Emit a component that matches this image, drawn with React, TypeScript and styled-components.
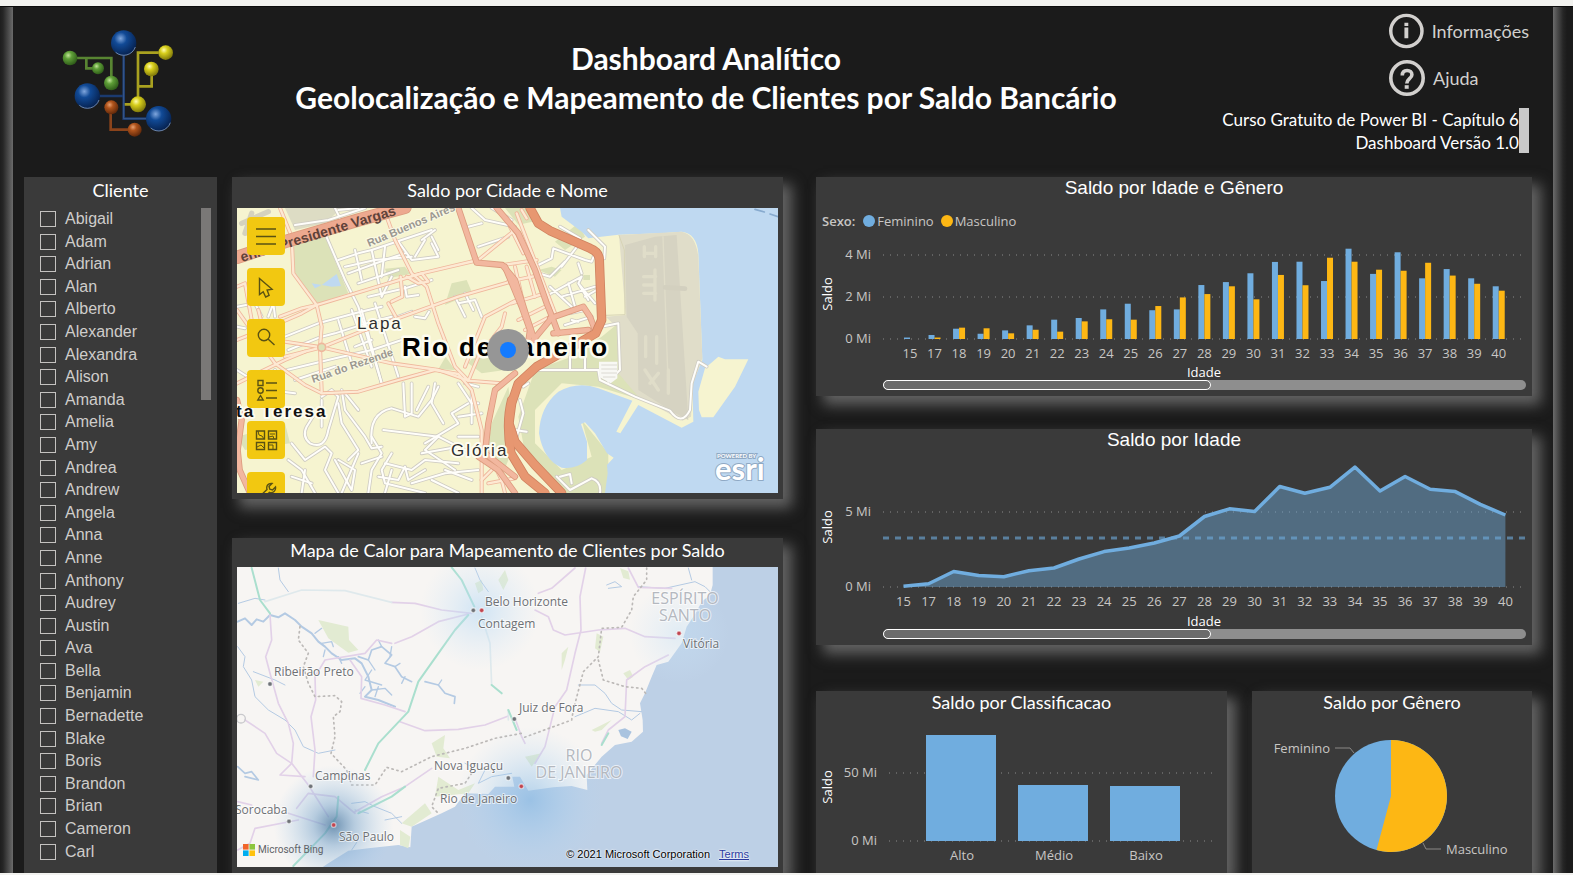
import React from "react";
import styled, { createGlobalStyle } from "styled-components";

const humanist = `Lato, "Open Sans", sans-serif`;
const ui = `"Open Sans", "Noto Sans", sans-serif`;
const grotesque = `"Liberation Sans", Arial, sans-serif`;

const blue = "#70addf";
const amber = "#fdb714";

const GlobalStyle = createGlobalStyle`
  *, *::before, *::after { box-sizing: border-box; }
  body { margin: 0; background: #1b1b1b; }
  h1, h2, p, ul { margin: 0; padding: 0; }
`;

/* ---------- page frame ---------- */

const Page = styled.div`
  display: flex;
  flex-direction: column;
  min-height: 100vh;
  font-family: ${humanist};
  color: #fff;
`;

const Strip = styled.div<{ $size: number }>`
  flex: none;
  height: ${(p) => p.$size}px;
  background: #f2f2ef;
`;

const Stage = styled.div`
  flex: 1;
  display: flex;
  border-top: 1px solid #0c0c0c;
  overflow: hidden;
`;

const Edge = styled.div<{ $side: "left" | "right" }>`
  flex: none;
  width: ${(p) => (p.$side === "left" ? 13 : 20)}px;
  background: linear-gradient(
    to ${(p) => p.$side},
    #6b6b6b 0,
    #484848 5px,
    #262626 10px,
    #1b1b1b 14px
  );
`;

const Canvas = styled.main`
  flex: 1;
  min-width: 0;
  display: flex;
  flex-direction: column;
  padding: 0 21px 0 11px;
  background: #1b1b1b;
`;

/* ---------- header ---------- */

const Header = styled.header`
  display: flex;
  height: 170px;
`;

const LogoBox = styled.div`
  flex: none;
  width: 193px;
  padding: 21px 0 0 36px;
`;

const Heading = styled.h1`
  flex: 1;
  padding-top: 32px;
  font-size: 30px;
  line-height: 39px;
  font-weight: 700;
  text-align: center;
`;

const Aside = styled.div`
  flex: none;
  width: 337px;
  display: flex;
  flex-direction: column;
  align-items: flex-end;
  padding: 6px 3px 0 0;
`;

const HelpNav = styled.nav`
  display: flex;
  flex-direction: column;
  gap: 11px;
  width: 140px;
`;

const HelpButton = styled.button`
  display: flex;
  align-items: center;
  gap: 8px;
  height: 36px;
  padding: 0;
  border: 0;
  background: none;
  color: #d2d0ce;
  font: 18px/36px ${humanist};
  white-space: nowrap;
`;

const Version = styled.div`
  display: flex;
  margin-top: 12px;
  font-size: 17px;
  line-height: 23px;
  text-align: right;
`;

const VersionBar = styled.span`
  width: 10px;
  height: 45px;
  background: #c8c8c8;
`;

/* ---------- panels ---------- */

const Columns = styled.div`
  flex: 1;
  display: grid;
  grid-template-columns: 193px minmax(0, 566fr) minmax(0, 749fr);
`;

const Column = styled.div<{ $gap: number; $left: number }>`
  display: flex;
  flex-direction: column;
  gap: ${(p) => p.$gap}px;
  margin-left: ${(p) => p.$left}px;
`;

const Panel = styled.section<{ $grow?: boolean; $flat?: boolean; $ratio?: number }>`
  display: flex;
  flex-direction: column;
  min-width: 0;
  flex: ${(p) => (p.$ratio ? `${p.$ratio} 1 0` : p.$grow ? "1 0 auto" : "none")};
  background: #3a3a3a;
  box-shadow: ${(p) => (p.$flat ? "none" : "8px 8px 13px 1px #636363")};
`;

const PanelTitle = styled.h2<{ $height: number; $plain?: boolean }>`
  flex: none;
  height: ${(p) => p.$height}px;
  line-height: ${(p) => (p.$plain ? p.$height : p.$height - 4)}px;
  font-family: ${(p) => (p.$plain ? grotesque : humanist)};
  font-size: ${(p) => (p.$plain ? 19 : 18)}px;
  font-weight: 400;
  text-align: center;
  white-space: nowrap;
`;

/* ---------- client filter ---------- */

const FilterBody = styled.div`
  flex: 1;
  display: flex;
  padding: 0 6px 10px 16px;
`;

const NameList = styled.ul`
  flex: 1;
  display: flex;
  flex-direction: column;
  justify-content: space-between;
  list-style: none;
`;

const NameLabel = styled.label`
  display: flex;
  align-items: center;
  gap: 9px;
  height: 22px;
  font: 16px/22px ${grotesque};
  color: #cfcdcb;
`;

const Tick = styled.input`
  appearance: none;
  width: 16px;
  height: 16px;
  margin: 0;
  border: 1px solid #c4c2c0;
`;

const ListScroll = styled.div`
  flex: none;
  width: 10px;
  height: 192px;
  background: #7a7877;
`;

/* ---------- maps ---------- */

const MapFrame = styled.div`
  position: relative;
  flex: 1 0 auto;
  margin: 0 5px 6px;
  overflow: hidden;
`;

const MapSvg = styled.svg`
  display: block;
  width: 100%;
`;

const MapLabel = styled.text<{ $size: number; $bold?: boolean; $road?: boolean }>`
  font-family: ${grotesque};
  font-size: ${(p) => p.$size}px;
  font-weight: ${(p) => (p.$bold ? 700 : 400)};
  letter-spacing: ${(p) => (p.$road ? "normal" : "2px")};
  paint-order: stroke;
  stroke-linejoin: round;
`;

const PlaceLabel = styled.text<{ $region?: boolean }>`
  font-family: ${ui};
  font-size: ${(p) => (p.$region ? 16 : 12)}px;
  fill: ${(p) => (p.$region ? "#b4b8bf" : "#6e7175")};
  stroke: rgba(255, 255, 255, 0.65);
  stroke-width: 2px;
  paint-order: stroke;
  text-anchor: ${(p) => (p.$region ? "middle" : "start")};
`;

const Tools = styled.div`
  position: absolute;
  top: 9px;
  left: 10px;
  display: flex;
  flex-direction: column;
  gap: 13px;
`;

const Tool = styled.button`
  display: block;
  width: 38px;
  height: 38px;
  padding: 0;
  border: 0;
  border-radius: 4px;
  background: #f2c811;
`;

const Credit = styled.div`
  position: absolute;
  right: 29px;
  bottom: 6px;
  display: flex;
  gap: 9px;
  font: 11px/14px ${grotesque};
  color: #000;
  text-shadow: 0 0 2px #fff, 0 0 2px #fff;
`;

const CreditLink = styled.a`
  color: #2b3aa0;
`;

const BingMark = styled.div`
  position: absolute;
  left: 6px;
  bottom: 10px;
  display: flex;
  align-items: center;
  gap: 3px;
  font: 10px/14px Roboto, sans-serif;
  color: #5f6368;
`;

/* ---------- charts ---------- */

const ChartSvg = styled.svg`
  display: block;
  width: 100%;
  height: auto;
`;

const AxisText = styled.text<{ $strong?: boolean }>`
  font-family: ${ui};
  font-size: 13px;
  fill: ${(p) => (p.$strong ? "#fff" : "#c8c6c4")};
`;

const Legend = styled.div`
  display: flex;
  align-items: center;
  gap: 2px;
  height: 20px;
  margin-top: 13px;
  padding-left: 6px;
  font: 13px/20px ${ui};
  color: #c8c6c4;
`;

const LegendTitle = styled.strong`
  margin-right: 6px;
  font-weight: 600;
`;

const LegendItem = styled.span`
  margin-right: 5px;
`;

const Dot = styled.span<{ $color: string }>`
  width: 12px;
  height: 12px;
  border-radius: 50%;
  background: ${(p) => p.$color};
`;

const Track = styled.div`
  height: 10px;
  margin: 0 6px 6px 67px;
  border-radius: 5px;
  background: #8e8e8e;
`;

const Thumb = styled.div`
  width: 51%;
  height: 10px;
  border: 1px solid #fff;
  border-radius: 5px;
  background: #6b6b6b;
`;

const Pair = styled.div`
  flex: 1 0 auto;
  display: flex;
  gap: 25px;
  margin-top: 13px;
`;

/* ---------- data ---------- */

const names = [
  "Abigail", "Adam", "Adrian", "Alan", "Alberto", "Alexander", "Alexandra", "Alison",
  "Amanda", "Amelia", "Amy", "Andrea", "Andrew", "Angela", "Anna", "Anne", "Anthony",
  "Audrey", "Austin", "Ava", "Bella", "Benjamin", "Bernadette", "Blake", "Boris",
  "Brandon", "Brian", "Cameron", "Carl",
];

const ages = [15, ...Array.from({ length: 24 }, (_, i) => 17 + i)];

const women = [0.07, 0.19, 0.49, 0.25, 0.41, 0.65, 0.92, 1, 1.41, 1.68, 1.37, 1.41, 2.57, 2.71, 3.13, 3.67, 3.68, 2.76, 4.3, 3.1, 4.13, 2.89, 3.33, 2.89, 2.51];
const men = [0, 0.07, 0.54, 0.51, 0.27, 0.44, 0.35, 0.84, 0.94, 0.92, 1.57, 1.98, 2.14, 2.51, 1.89, 3.05, 2.56, 3.87, 3.68, 3.3, 3.25, 3.63, 3.02, 2.63, 2.3];
const totals = [0.05, 0.22, 1.03, 0.76, 0.69, 1.09, 1.27, 1.87, 2.36, 2.6, 2.93, 3.4, 4.7, 5.21, 5.03, 6.7, 6.25, 6.65, 7.99, 6.4, 7.37, 6.52, 6.36, 5.51, 4.8];

/* ---------- drawings ---------- */

function Logo() {
  const tones: Record<string, [string, string, string]> = {
    b: ["#7fa6dd", "#114a96", "#06204d"],
    g: ["#c3e59a", "#5f9f38", "#2d5a18"],
    y: ["#fffbb0", "#d8cf1c", "#7d760a"],
    o: ["#e8a070", "#b0541c", "#5e270a"],
  };
  const balls: [string, number, number, number][] = [
    ["b", 371, 130, 38], ["b", 262, 289, 38], ["b", 476, 357, 38],
    ["g", 210, 175, 22], ["g", 294, 206, 18], ["g", 334, 250, 22],
    ["y", 497, 159, 22], ["y", 454, 208, 22], ["y", 414, 314, 24],
    ["o", 334, 323, 21], ["o", 404, 390, 21],
  ];
  return (
    <svg width="117" height="112" viewBox="180 85 351 336" fill="none" role="img" aria-label="Logo">
      <defs>
        {Object.entries(tones).map(([k, [a, b, c]]) => (
          <radialGradient key={k} id={`ball-${k}`} cx="0.38" cy="0.32" r="0.7">
            <stop offset="0" stopColor={a} />
            <stop offset="0.35" stopColor={b} />
            <stop offset="1" stopColor={c} />
          </radialGradient>
        ))}
      </defs>
      <path d="M371 165V357H440M298 289H371" stroke="#1b3a6e" strokeWidth="8" />
      <path d="M371 165V357H440" stroke="#4a6a9c" strokeWidth="2" />
      <path d="M230 175H334V232M259 175V206H278" stroke="#588532" strokeWidth="8" />
      <path d="M476 159H414V292M455 228V260H414M374 314H392" stroke="#a9a120" strokeWidth="8" />
      <path d="M332 342V390H386" stroke="#8a431b" strokeWidth="8" />
      {balls.map(([k, x, y, r]) => (
        <g key={`${x}`}>
          <circle cx={x} cy={y} r={r} fill={`url(#ball-${k})`} />
          {k === "b" && (
            <path
              d={`M${x - 24} ${y + 28}A37 37 0 0 0 ${x + 35} ${y + 12}`}
              stroke="#9fb6d8"
              strokeWidth="2"
            />
          )}
        </g>
      ))}
    </svg>
  );
}

function InfoIcon() {
  return (
    <svg width="36" height="36" viewBox="0 0 36 36" fill="none" aria-hidden="true">
      <circle cx="18" cy="18" r="16.2" stroke="#d2d0ce" strokeWidth="3.6" />
      <path d="M18 9.5v3.4M18 14.500v11" stroke="#d2d0ce" strokeWidth="4" />
    </svg>
  );
}

function HelpIcon() {
  return (
    <svg width="36" height="36" viewBox="0 0 36 36" fill="none" aria-hidden="true">
      <circle cx="18" cy="18" r="16.2" stroke="#d2d0ce" strokeWidth="3.6" />
      <path
        d="M13.3 15.5c0-3.2 1.9-5 4.8-5s4.8 1.7 4.8 4.2c0 4-5.1 4.1-5.1 8.8"
        stroke="#d2d0ce"
        strokeWidth="3.6"
      />
      <path d="M17.7 25.2v3.6" stroke="#d2d0ce" strokeWidth="4" />
    </svg>
  );
}

const toolIcons: { name: string; art: React.ReactNode }[] = [
  { name: "Menu", art: <path d="M9 12h20M9 19.500h20M9 27h20" /> },
  { name: "Selecionar", art: <path d="M12.500 10.500v16l3.700-2.700 2.500 5.200 3.400-1.700-2-5.200 5-.9z" /> },
  { name: "Buscar", art: <><circle cx="17" cy="16" r="5.700" /><path d="M21 20l6.500 6" /></> },
  {
    name: "Legenda",
    art: (
      <>
        <path d="M11 10.500h5v5h-5zM13.500 25.500l2.700 4.500h-5.400zM19 13h11M19 20.500h11M19 28h11" />
        <circle cx="13.500" cy="20.500" r="2.700" />
      </>
    ),
  },
  {
    name: "Mapa base",
    art: (
      <>
        <path d="M9.500 10h8v8h-8zM21.500 10h8v8h-8zM9.500 21.500h8v7h-8zM21.500 21.500h8v7h-8z" />
        <path strokeWidth="1" d="M11 10l1 4 3 1 2 3M23 13h5M22 16l4-1 1 3M10 26l4-2 3 3M22 24h4v4" />
      </>
    ),
  },
  {
    name: "Ferramentas",
    art: <path d="M10 27l10-9.500c-1-3.500 1-6.500 5-6l-3 3 .8 2.700 2.700.7 3-3c.7 4-2.500 6.500-6 5.500L12 30" />,
  },
];

const highways = [
  "M915 114L940 160L975 182L1095 235Q1122 245 1123 270L1130 450L1112 490L1060 520L935 590L880 640L860 700L852 760L870 815L930 885L1010 969",
  "M860 690Q842 760 858 850L900 920L960 969",
];
const avenues = [
  "M36 262L180 215L400 150L540 112",
  "M700 114L755 278L832 285L870 330L905 440L925 500",
  "M815 114L880 190L930 300L965 400L985 450L1000 490",
  "M840 290L890 410L915 480L905 550",
  "M975 445L1075 410L1095 440L1110 480M985 490L1090 480M925 510L975 450",
  "M870 610L810 660L790 760L780 850L870 920",
  "M36 690L50 750L38 840L44 900L75 969",
  "M760 860L820 900L870 969",
];
const streets = [
  "M165 114L200 200L205 310L275 405L290 470L285 530L290 665",
  "M36 510L150 465L230 430L275 405L450 352L590 310L760 270L870 180",
  "M165 440L230 415L275 405",
  "M180 515L290 532L500 580L640 600L730 632L830 640",
  "M180 560L290 532L420 480L560 430L700 380L875 330",
  "M36 640L180 570L240 545M36 420L150 580",
  "M150 580L240 645L290 670L400 665L520 630L630 600L700 612L740 660L770 780L770 969",
  "M485 140L510 210L560 310L605 350L640 460L690 590L730 632",
  "M36 350L60 340L80 450M110 460L100 420",
  "M490 400L512 440M500 395L532 380L527 320",
  "M545 320L580 340L610 335L590 310L560 318",
  "M730 632L760 560L830 470L840 430M720 590L780 440L875 390",
  "M875 130L990 430M890 120L905 145",
  "M835 285L935 270M850 335L945 315M860 400L960 370M880 450L970 405M900 480L975 440",
  "M855 170L895 250M870 290L895 400M905 290L930 380",
  "M780 830L830 930L840 969M800 900L770 930M790 940L870 925",
];
const lanes = [
  "M210 165L310 150L420 114M330 114L355 165M400 114L340 120",
  "M300 190L360 330L400 410L470 640",
  "M340 270L400 250L440 240L620 180M360 290L450 270L560 260",
  "M390 240L410 330M440 240L470 380M480 230L470 320M520 215L560 270L640 260L620 220",
  "M370 310L480 270L540 250M400 340L520 300M500 320L470 380",
  "M600 210L570 260M630 180L590 210M620 200L640 240",
  "M36 410L90 400L110 440M36 470L60 475M130 440L145 400L150 440",
  "M180 500L280 460L390 430L470 410M190 540L290 500L330 490L440 455L500 440",
  "M340 450L380 580M410 420L470 640M380 420L440 590M450 400L520 620",
  "M185 600L350 560L440 540L530 510M210 630L300 600L330 590M390 530L440 510",
  "M570 440L600 445L612 425M690 380L720 440M720 370L745 420M700 400L750 390L770 440",
  "M520 440L560 425M430 380L540 355L620 330M540 350L545 380L580 375",
  "M36 600L130 660L210 670M150 600L110 640",
  "M290 680L320 660L340 680L310 780Q300 840 255 820Q230 800 245 770L270 730M290 690L290 770",
  "M350 660L360 720L420 800L440 835L470 830M360 670L400 720M340 700L350 760L400 840L370 870",
  "M200 820L240 870L300 830L320 850L300 900L340 969M190 870L230 900L270 969M330 870L380 960L390 900L340 870",
  "M440 820Q430 730 500 715L580 740L620 690L640 650M475 780L640 800L680 820L720 850",
  "M440 800L470 850L440 900L430 969M480 880L560 900L600 870L700 880M460 920L520 930L540 890L550 930L600 900M500 850L470 900L480 940L600 969",
  "M535 640L540 740L560 730L560 640M575 720L610 650M620 700L655 760M630 640L620 700",
  "M600 820L700 760L680 730L730 700M590 850L700 830L740 850M700 640L740 700L760 700M720 640L760 650",
  "M640 800L600 840L690 900M660 900L740 930M620 930L700 969M560 940L660 910L760 900",
  "M200 920L260 940M230 969L240 900M400 850L350 969M410 880L470 860M480 969L500 900",
  "M700 740L770 730M740 660L740 760M760 800L700 800",
  "M740 114L780 150L870 170M730 170L770 160M760 230L850 200M800 114L860 150",
  "M940 285L980 265L985 235L1080 270L1100 275L1110 250M1010 290L1060 225M940 310L975 320L1020 275M1060 280L1070 310",
  "M970 375L1070 320L1060 340L1110 400M975 350L1040 410M1060 340L1090 390M1030 340L1050 410M1080 380L1115 360M1010 380L1110 350",
  "M1020 465L1100 440M1035 430L1080 420M1040 450L1060 455M1090 180L1140 230L1138 265M1005 170L1065 205",
  "M930 600L1140 600M1035 560L1035 600M1080 560L1080 600M1130 470L1180 460L1185 600L1150 635",
  "M885 690L895 730L875 800M895 650L910 640M870 780L905 785",
  "M995 920L1035 960L1100 925Q1130 935 1125 969M1005 920L1035 912L1040 940",
  "M1120 600L1125 630L1230 680L1335 722Q1370 770 1395 720L1400 640L1420 575L1445 590",
];

function CityMap() {
  return (
    <MapSvg height="285" viewBox="0 0 541 285" preserveAspectRatio="xMidYMid slice" role="img" aria-label="Mapa do Rio de Janeiro">
      <rect width="541" height="285" fill="#f6f4d0" />
      <g transform="translate(-12 -38) scale(0.33333)" fill="none" strokeLinejoin="round" strokeLinecap="round">
        <g fill="#dce2b8">
          <path d="M200 225L300 200L370 370L275 402L210 310zM480 296L540 290L556 312L490 325zM660 405L680 340L725 330L742 370zM640 598L662 560L690 600zM770 610L730 580L760 540L830 560L840 600z" />
          <path d="M780 880L800 760L850 650L860 720L850 870L830 920zM36 800L180 760L195 820L60 840z" />
          <path d="M990 215L1060 160L1080 200L1020 240zM940 300L980 290L1010 300L990 320zM1075 315h20v15h-20zM840 114h70l20 40l-50 10z" />
          <path d="M930 600L1040 560L1130 500L1180 460L1190 610L1270 670L1250 690L1120 650L1010 640L930 720L930 820L1010 900L1100 860L1070 750L1150 850L1150 969L1020 969L900 850L880 740z" />
        </g>
        <path d="M180 114L350 114L300 160L210 180z" fill="#dddcc4" />
        <path d="M260 340L290 345L335 312L348 348L320 350L290 345L270 355z" fill="#bfd9f1" />
        <path d="M50 160L130 125M60 190L80 130" stroke="#d5d2be" strokeWidth="16" />
        <path
          d="M1005 114L1659 114L1659 969L1140 969L1148 910L1146 885L1166 863L1146 850L1110 790L1080 757L1068 762L1086 815L1086 870Q1050 900 1010 893Q955 870 942 790Q945 710 1000 665Q1060 632 1120 655L1222 692L1174 785L1186 790L1240 705L1370 773L1405 755L1402 640L1432 570L1420 250Q1415 190 1370 185L1310 190L1180 194L1090 205L1070 185L1010 140z"
          fill="#bfd9f1"
        />
        <path d="M1420 665L1440 595L1480 560L1500 568L1570 568L1530 650L1465 742L1430 742L1422 720z" fill="#f6f4d0" />
        <path d="M1182 195L1370 185Q1412 192 1420 260L1432 565L1405 640L1398 740L1372 752L1240 680L1180 610L1175 470L1142 440L1202 435z" fill="#e0ddc9" />
        <path d="M1142 436L1200 434L1198 240L1182 196" stroke="#d7d4b6" strokeWidth="3" />
        <path d="M1200 225L1290 200L1355 195L1390 750L1350 730L1240 660L1238 490L1205 440z" fill="#d6d3c2" />
        <path d="M1258 250h34M1258 230v30M1292 230v30M1256 320h36M1290 300v90M1256 345h30M1256 370h36M1262 500v60M1295 500v80M1330 600v70M1275 640l25 -30M1260 600l40 60" stroke="#e0ddc9" strokeWidth="10" />
        <path d="M1314 200l15 430M1326 350h40" stroke="#e0ddc9" strokeWidth="4" />
        <path d="M1320 352l60 4" stroke="#d3d0bf" strokeWidth="14" />
        <path d="M1590 118l28 8M1635 132l24 8" stroke="#88abcf" strokeWidth="5" />

        {lanes.map((d) => <path key={d} d={d} stroke="#cfccc3" strokeWidth="11" />)}
        {lanes.map((d) => <path key={d} d={d} stroke="#fffefa" strokeWidth="6" />)}
        {streets.map((d) => <path key={d} d={d} stroke="#efb79c" strokeWidth="12" />)}
        {streets.map((d) => <path key={d} d={d} stroke="#fde9d3" strokeWidth="7" />)}
        {avenues.map((d, i) => <path key={d} d={d} stroke="#dc9b7e" strokeWidth={i ? 19 : 40} />)}
        {avenues.map((d, i) => <path key={d} d={d} stroke={i ? "#f2b79f" : "#eda98f"} strokeWidth={i ? 14 : 35} />)}
        {highways.map((d) => <path key={d} d={d} stroke="#cf8260" strokeWidth="28" />)}
        {highways.map((d) => <path key={d} d={d} stroke="#e79771" strokeWidth="23" />)}
        <path d="M1122 575h55v50l-20 15l-35 -20z" fill="#f8f8f4" />
        <path d="M1130 585h45M1130 597h45M1130 609h45M1135 621h35" stroke="#dcdad2" strokeWidth="3" />
        <circle cx="290" cy="532" r="12" fill="#dce2b8" stroke="#efb79c" strokeWidth="5" />
      </g>

      <MapLabel $size={14} $bold x="5" y="54" fill="#5f4239" $road transform="rotate(-17 5 54)">enida Presidente Vargas</MapLabel>
      <MapLabel $size={11} $bold x="132" y="39" fill="#9b9891" stroke="#fbfae6" strokeWidth="2" $road transform="rotate(-23 132 39)">Rua Buenos Aires</MapLabel>
      <MapLabel $size={11} $bold x="76" y="175" fill="#9b9891" stroke="#fbfae6" strokeWidth="2" $road transform="rotate(-19 76 175)">Rua do Rezende</MapLabel>
      <MapLabel $size={17} x="120" y="121" fill="#2e2e2e" stroke="#fdfcf0" strokeWidth="4">Lapa</MapLabel>
      <MapLabel $size={17} x="214" y="248" fill="#2e2e2e" stroke="#fdfcf0" strokeWidth="4">Glória</MapLabel>
      <MapLabel $size={17} $bold x="-1" y="209" fill="#111" stroke="#fdfcf0" strokeWidth="4">ta Teresa</MapLabel>
      <MapLabel $size={26} $bold x="165" y="148" fill="#000" stroke="#fdfcf0" strokeWidth="5">Rio de Janeiro</MapLabel>
      <circle cx="271" cy="142" r="21" fill="#969696" />
      <circle cx="271" cy="142" r="8" fill="#147bff" />
      <g fill="#fff" stroke="#8fa9c4" strokeWidth="2" paintOrder="stroke" fontFamily={humanist} fontWeight="700">
        <text x="478" y="272" fontSize="31">esri</text>
        <text x="480" y="250" fontSize="6">POWERED BY</text>
      </g>
    </MapSvg>
  );
}

const heat = [
  { x: 326, y: 885, r: 180, id: "core" },
  { x: 915, y: 810, r: 220, id: "mid" },
  { x: 765, y: 241, r: 180, id: "soft" },
  { x: 1362, y: 310, r: 150, id: "faint" },
];
const towns: [number, number, boolean][] = [
  [745, 241, false], [135, 462, false], [257, 769, false], [192, 874, false],
  [868, 567, false], [850, 744, false], [770, 241, true], [326, 885, true],
  [889, 769, true], [1362, 310, true],
];

function HeatMap() {
  return (
    <MapSvg height="300" viewBox="0 0 541 300" preserveAspectRatio="xMidYMid slice" role="img" aria-label="Mapa de calor do sudeste do Brasil">
      <defs>
        <radialGradient id="core">
          <stop offset="0" stopColor="#4a779f" stopOpacity="0.8" />
          <stop offset="0.35" stopColor="#76a3cb" stopOpacity="0.5" />
          <stop offset="1" stopColor="#a9d0f2" stopOpacity="0" />
        </radialGradient>
        <radialGradient id="mid">
          <stop offset="0" stopColor="#84b8e4" stopOpacity="0.6" />
          <stop offset="0.5" stopColor="#9cc9ee" stopOpacity="0.3" />
          <stop offset="1" stopColor="#b9daf5" stopOpacity="0" />
        </radialGradient>
        <radialGradient id="soft">
          <stop offset="0" stopColor="#b0d6f5" stopOpacity="0.55" />
          <stop offset="1" stopColor="#cfe6f8" stopOpacity="0" />
        </radialGradient>
        <radialGradient id="faint">
          <stop offset="0" stopColor="#c4e0f5" stopOpacity="0.45" />
          <stop offset="1" stopColor="#cfe6f8" stopOpacity="0" />
        </radialGradient>
      </defs>
      <rect width="541" height="300" fill="#f7f5f3" />
      <g transform="translate(-12 -37) scale(0.33333)" fill="none" strokeLinejoin="round" strokeLinecap="round">
        <g fill="#e2ebd2">
          <path d="M280 270L370 290L372 330L400 360L370 368L310 325zM820 150L840 120L850 150L835 180zM750 160l20 -10l5 30l-15 10zM620 640l40 -25l-5 40l20 30l-40 -5zM640 740l60 40l50 -20l-20 30l-100 10zM530 880l70 -60l20 30l-60 40zM90 450l25 5l-15 15z" />
          <path d="M1100 600l60 -30l-30 30l-20 5zM1195 430l20 -10l10 20l-15 10zM1115 310l20 10l-10 45l-15 -10zM1185 114l25 10l5 25l-20 -5zM1010 370l20 -20l-10 40l-10 30zM900 680l50 -10l-30 40z" />
        </g>
        <path
          d="M1463 100L1463 165L1455 195L1430 215L1412 250L1385 290L1370 340L1330 395L1295 405L1280 440L1260 490L1245 520L1253 570L1254 605L1220 635L1170 645L1130 680L1085 735L1087 780L1040 768L985 772L910 782L885 740L862 740L868 770L810 770L790 792L720 790L690 830L650 850L560 890L556 952L520 945L430 955L370 962L310 1000L280 1020L1670 1020L1670 100z"
          fill="#bdd0e6"
        />
        <path d="M1180 600l20 -5l20 10l-12 22l-20 -8z" fill="#a9c3df" />
        <path d="M525 900L556 920L550 955L525 945z" fill="#e2ebd2" />
        <g stroke="#b4cae3" strokeWidth="3">
          <path d="M38 275L60 265L80 285L95 268L115 275L135 255L160 262L180 250L210 270L230 290L260 310L280 335L300 350L320 370L350 390L390 385L410 400L430 440L440 480L420 500L460 510L510 530" strokeWidth="6" />
          <path d="M400 380L430 390L440 360L470 350L500 375L480 400L510 410L530 440L560 455M600 455L640 465L660 490L690 500L688 520" strokeWidth="5" />
          <path d="M270 310l20 -15M290 340l30 -5l5 15M300 360l-5 20M340 380l10 20M430 390l20 30M440 420l-20 30l50 15M440 480l40 -5l20 20M450 500l10 -30M470 350l-10 -20M500 350l-5 30M640 465l10 -15M420 470l-15 20M510 410l15 -10M540 440l-10 20" strokeWidth="4" />
          <path d="M160 114L165 150L190 185M40 220L90 205L120 210M38 350L60 380L55 410L80 450L90 500L130 540L180 570L210 600L235 650L280 670L330 660M750 114L765 150L790 185M85 425L150 450L180 465" />
          <path d="M38 710L60 730L80 725L100 750L60 740" strokeWidth="5" />
          <path d="M1145 165L1170 155L1190 170L1150 175M1240 170L1320 175L1410 155L1440 170L1460 190M1060 465L1110 465L1140 490L1160 520L1190 540L1250 545M1050 560L1110 535L1180 545L1220 570L1245 550M1390 114L1400 150" />
          <path d="M380 820L420 815L450 830L500 850L530 880M390 840L430 850M480 870L530 860M350 920L400 930L380 960M780 720L760 760L800 740L860 730M740 710L720 700" />
        </g>
        <g stroke="#e2d1e8" strokeWidth="5">
          <path d="M135 255L140 330L122 380L135 430L160 520L190 580L205 640L200 700L250 765L310 860" />
          <path d="M60 570L120 610L155 670L200 700L165 735L240 740M38 960L75 940L90 895L220 870M190 850L300 885M38 815L80 825" />
          <path d="M500 217L570 220L650 240L740 250M510 340L560 320L640 275L730 252M500 340L455 330L420 370L300 390L270 440L272 510L258 560L270 660L265 740" />
          <path d="M375 390L410 440L408 505L480 525L540 545M525 575L600 602L700 598L780 585L850 558M620 715L540 770L470 800L390 845M215 835L250 790L330 800L390 850" />
          <path d="M940 190L980 175L1050 114M1082 114L1065 200L1068 300L1050 370L1025 480L990 530L975 590L960 650L930 700M930 240L970 260L985 300L1020 315L1120 300L1200 295L1260 320L1350 325M1240 172L1210 114M1330 375L1260 410L1205 450L1200 560L1150 600L1130 640M1240 172L1340 175M870 565L890 620L900 640" />
        </g>
        <path d="M120 215L230 180L360 182L500 217M770 260L795 340L800 465M850 540L850 570" stroke="#dfe9ec" strokeWidth="5" />
        <path d="M80 114L105 210L135 250M680 112L710 150L748 230M730 255L690 300L640 370L580 455L550 545L460 640L420 720M400 850L500 800L540 770M205 1008L300 910L335 860L340 800M800 465L830 490M850 540L875 600M1150 610L1130 645" stroke="#aadfce" strokeWidth="6" />
        <path d="M225 290L220 330L250 370L235 410L250 460L270 500L330 497L350 515L345 545L325 560L330 620L318 670L365 720L380 765L450 765L485 712L530 725L620 680L720 655L810 625L890 610M1265 114L1265 150L1225 200L1220 240L1190 292L1130 295L1120 380L1075 425L1045 540L1040 570L890 625M1120 390L1135 450L1200 470L1250 475L1262 490M740 730L720 760L640 775L620 830L640 850" stroke="#bcb9b7" strokeWidth="5" strokeDasharray="4 11" />
        {heat.map((h) => <circle key={h.id} cx={h.x} cy={h.y} r={h.r} fill={`url(#${h.id})`} />)}
        {towns.map(([x, y, hot]) => (
          <circle key={`${x}-${y}`} cx={x} cy={y} r="7" fill={hot ? "#c04550" : "#6f7378"} stroke="#fff" strokeOpacity="0.5" strokeWidth="4" />
        ))}
        <circle cx="48" cy="566" r="13" stroke="#c9c9cc" strokeWidth="4" />
      </g>
      <PlaceLabel x="248" y="39">Belo Horizonte</PlaceLabel>
      <PlaceLabel x="241" y="61">Contagem</PlaceLabel>
      <PlaceLabel x="37" y="109">Ribeirão Preto</PlaceLabel>
      <PlaceLabel x="78" y="213">Campinas</PlaceLabel>
      <PlaceLabel x="-2" y="247">Sorocaba</PlaceLabel>
      <PlaceLabel x="102" y="274">São Paulo</PlaceLabel>
      <PlaceLabel x="197" y="203">Nova Iguaçu</PlaceLabel>
      <PlaceLabel x="203" y="236">Rio de Janeiro</PlaceLabel>
      <PlaceLabel x="282" y="145">Juiz de Fora</PlaceLabel>
      <PlaceLabel x="446" y="81">Vitória</PlaceLabel>
      <PlaceLabel $region x="448" y="37">ESPÍRITO</PlaceLabel>
      <PlaceLabel $region x="448" y="54">SANTO</PlaceLabel>
      <PlaceLabel $region x="342" y="194">RIO</PlaceLabel>
      <PlaceLabel $region x="342" y="211">DE JANEIRO</PlaceLabel>
    </MapSvg>
  );
}

function Grid({ from, to, rows }: { from: number; to: number; rows: number[] }) {
  return (
    <g stroke="#626262" strokeWidth="2" strokeDasharray="1 6">
      {rows.map((y) => <path key={y} d={`M${from} ${y}H${to}`} />)}
    </g>
  );
}

function AxisName({ y }: { y: number }) {
  return (
    <AxisText $strong textAnchor="middle" transform={`translate(16 ${y}) rotate(-90)`}>Saldo</AxisText>
  );
}

function GenderByAge() {
  const mid = (i: number) => 94 + i * 24.53;
  return (
    <ChartSvg viewBox="0 0 716 149" role="img" aria-label="Saldo por Idade e Gênero">
      <Grid from={67} to={705} rows={[24, 66, 108]} />
      {[4, 2, 0].map((v) => (
        <AxisText key={v} x="55" y={112 - v * 21} textAnchor="end">{v} Mi</AxisText>
      ))}
      <AxisName y={63} />
      {ages.map((age, i) => (
        <g key={age}>
          <rect x={mid(i) - 6} y={108 - women[i] * 21} width="6" height={women[i] * 21} fill={blue} />
          <rect x={mid(i)} y={108 - men[i] * 21} width="6" height={men[i] * 21} fill={amber} />
          <AxisText x={mid(i)} y="127" textAnchor="middle">{age}</AxisText>
        </g>
      ))}
      <AxisText $strong x="388" y="146" textAnchor="middle">Idade</AxisText>
    </ChartSvg>
  );
}

function TotalByAge() {
  const x = (i: number) => 87.5 + i * 25.08;
  const line = totals.map((v, i) => `${x(i).toFixed(1)} ${(137 - v * 15).toFixed(1)}`).join("L");
  return (
    <ChartSvg viewBox="0 0 716 179" role="img" aria-label="Saldo por Idade">
      <Grid from={67} to={705} rows={[62, 137]} />
      <AxisText x="55" y="66" textAnchor="end">5 Mi</AxisText>
      <AxisText x="55" y="141" textAnchor="end">0 Mi</AxisText>
      <AxisName y={77} />
      <path d={`M${line}L${x(24)} 137H${x(0)}z`} fill={blue} fillOpacity="0.43" />
      <path d="M67 88H711" stroke={blue} strokeOpacity="0.6" strokeWidth="3" strokeDasharray="6 6" />
      <path d={`M${line}`} fill="none" stroke={blue} strokeWidth="3.5" strokeLinejoin="round" />
      {ages.map((age, i) => (
        <AxisText key={age} x={x(i)} y="156" textAnchor="middle">{age}</AxisText>
      ))}
      <AxisText $strong x="388" y="176" textAnchor="middle">Idade</AxisText>
    </ChartSvg>
  );
}

function ByClass() {
  const bars: [string, number, number][] = [["Alto", 110, 106], ["Médio", 202, 56], ["Baixo", 294, 55]];
  return (
    <ChartSvg viewBox="0 0 411 156" role="img" aria-label="Saldo por Classificacao">
      <Grid from={73} to={400} rows={[56, 124]} />
      <AxisText x="61" y="60" textAnchor="end">50 Mi</AxisText>
      <AxisText x="61" y="128" textAnchor="end">0 Mi</AxisText>
      <AxisName y={70} />
      {bars.map(([name, x, h]) => (
        <g key={name}>
          <rect x={x} y={124 - h} width="70" height={h} fill={blue} />
          <AxisText x={x + 36} y="143" textAnchor="middle">{name}</AxisText>
        </g>
      ))}
    </ChartSvg>
  );
}

function ByGender() {
  return (
    <ChartSvg viewBox="0 0 280 156" role="img" aria-label="Saldo por Gênero">
      <circle cx="139" cy="79" r="56" fill={blue} />
      <path d="M139 79V23A56 56 0 1 1 124.500 133.100z" fill={amber} />
      <path d="M83 31H98L102 36M171 126L174 132H189" fill="none" stroke="#8a8886" />
      <AxisText x="78" y="36" textAnchor="end">Feminino</AxisText>
      <AxisText x="194" y="137">Masculino</AxisText>
    </ChartSvg>
  );
}

/* ---------- page ---------- */

export default function App() {
  return (
    <Page>
      <GlobalStyle />
      <Strip $size={6} />
      <Stage>
        <Edge $side="left" />
        <Canvas>
          <Header>
            <LogoBox><Logo /></LogoBox>
            <Heading>
              Dashboard Analítico
              <br />
              Geolocalização e Mapeamento de Clientes por Saldo Bancário
            </Heading>
            <Aside>
              <HelpNav>
                <HelpButton><InfoIcon />Informações</HelpButton>
                <HelpButton><HelpIcon />Ajuda</HelpButton>
              </HelpNav>
              <Version>
                <p>
                  Curso Gratuito de Power BI - Capítulo 6
                  <br />
                  Dashboard Versão 1.0
                </p>
                <VersionBar />
              </Version>
            </Aside>
          </Header>

          <Columns>
            <Panel $flat>
              <PanelTitle $height={31}>Cliente</PanelTitle>
              <FilterBody>
                <NameList>
                  {names.map((n) => (
                    <li key={n}>
                      <NameLabel><Tick type="checkbox" name="cliente" value={n} />{n}</NameLabel>
                    </li>
                  ))}
                </NameList>
                <ListScroll />
              </FilterBody>
            </Panel>

            <Column $gap={39} $left={15}>
              <Panel>
                <PanelTitle $height={31}>Saldo por Cidade e Nome</PanelTitle>
                <MapFrame>
                  <CityMap />
                  <Tools>
                    {toolIcons.map((t) => (
                      <Tool key={t.name} aria-label={t.name}>
                        <svg width="38" height="38" viewBox="0 0 38 38" fill="none" stroke="#5a5213" strokeWidth="1.4">{t.art}</svg>
                      </Tool>
                    ))}
                  </Tools>
                </MapFrame>
              </Panel>
              <Panel $grow>
                <PanelTitle $height={29}>Mapa de Calor para Mapeamento de Clientes por Saldo</PanelTitle>
                <MapFrame>
                  <HeatMap />
                  <BingMark>
                    <svg width="12" height="12" viewBox="0 0 12 12" aria-hidden="true">
                      <path d="M0 0h5.600v5.600H0z" fill="#f1652a" />
                      <path d="M6.400 0H12v5.600H6.400z" fill="#8dc63f" />
                      <path d="M0 6.400h5.600V12H0z" fill="#00adef" />
                      <path d="M6.400 6.400H12V12H6.400z" fill="#ffc20e" />
                    </svg>
                    Microsoft Bing
                  </BingMark>
                  <Credit>
                    © 2021 Microsoft Corporation
                    <CreditLink href="#terms">Terms</CreditLink>
                  </Credit>
                </MapFrame>
              </Panel>
            </Column>

            <Column $gap={33} $left={33}>
              <Panel>
                <PanelTitle $height={21} $plain>Saldo por Idade e Gênero</PanelTitle>
                <Legend>
                  <LegendTitle>Sexo:</LegendTitle>
                  <Dot $color={blue} /><LegendItem>Feminino</LegendItem>
                  <Dot $color={amber} /><LegendItem>Masculino</LegendItem>
                </Legend>
                <GenderByAge />
                <Track><Thumb /></Track>
              </Panel>
              <Panel>
                <PanelTitle $height={21} $plain>Saldo por Idade</PanelTitle>
                <TotalByAge />
                <Track><Thumb /></Track>
              </Panel>
              <Pair>
                <Panel $ratio={411}>
                  <PanelTitle $height={26}>Saldo por Classificacao</PanelTitle>
                  <ByClass />
                </Panel>
                <Panel $ratio={280}>
                  <PanelTitle $height={26}>Saldo por Gênero</PanelTitle>
                  <ByGender />
                </Panel>
              </Pair>
            </Column>
          </Columns>
        </Canvas>
        <Edge $side="right" />
      </Stage>
      <Strip $size={2} />
    </Page>
  );
}
